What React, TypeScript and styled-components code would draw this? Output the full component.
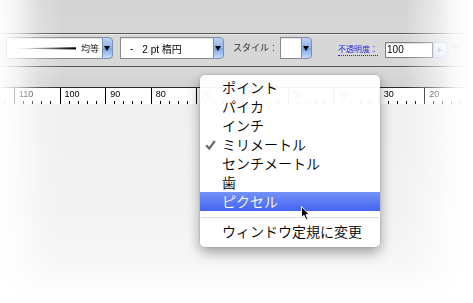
import styled, { createGlobalStyle } from 'styled-components'

const GlobalStyle = createGlobalStyle`
  html, body {
    margin: 0;
    padding: 0;
    background: #fff;
  }
  body {
    font-family: 'Liberation Sans', 'Noto Sans CJK JP', sans-serif;
  }
`

const RULER_STEP = 45.6
// first and last segments run off the edges, so they carry no number
const rulerLabels = ['', '110', '100', '90', '80', '70', '60', '50', '40', '30', '20', '']

const units = ['ポイント', 'パイカ', 'インチ', 'ミリメートル', 'センチメートル', '歯', 'ピクセル']

const App = () => {
    return (
        <>
            <GlobalStyle />
            <Stage>
                <Shot>
                    <TopArea />
                    <Toolbar>
                        <Combo $w={107} $ml={0}>
                            <ComboField>
                                <StrokePreview width='60' height='5' viewBox='0 0 60 5'>
                                    <defs>
                                        <linearGradient id='strokeFade' x1='0' x2='1' y1='0' y2='0'>
                                            <stop offset='0' stopColor='#d8d8d8' />
                                            <stop offset='1' stopColor='#000' />
                                        </linearGradient>
                                    </defs>
                                    <polygon points='0,2.3 60,1.2 60,3.6 0,2.8' fill='url(#strokeFade)' />
                                </StrokePreview>
                                <SmallCjk>均等</SmallCjk>
                            </ComboField>
                            <ComboButton />
                        </Combo>
                        <Combo $w={104} $ml={7}>
                            <ComboField>
                                <FieldText>-</FieldText>
                                <FieldText $ml={9}>2 pt 楕円</FieldText>
                            </ComboField>
                            <ComboButton />
                        </Combo>
                        <Label $ml={9} $size={9}>スタイル：</Label>
                        <Combo $w={32} $ml={2}>
                            <ComboField />
                            <ComboButton />
                        </Combo>
                        <LinkLabel>不透明度：</LinkLabel>
                        <NumberInput>100</NumberInput>
                        <Spinner />
                        <Percent>%</Percent>
                    </Toolbar>
                    <Gutter />
                    <Ruler>
                        <RulerTrack>
                            {rulerLabels.map((n, i) => (
                                <RulerSeg key={i} $w={RULER_STEP}>{n}</RulerSeg>
                            ))}
                        </RulerTrack>
                    </Ruler>
                    <Canvas />
                </Shot>

                <Menu>
                    {units.map((u) => (
                        <MenuItem key={u} $active={u === 'ピクセル'}>
                            <CheckSlot>
                                {u === 'ミリメートル' && (
                                    <svg width='11' height='10' viewBox='0 0 11 10'>
                                        <path d='M1.2 5.2 L4.2 8.6 L9.8 1' fill='none' stroke='#6e6e6e' strokeWidth='2.3' />
                                    </svg>
                                )}
                            </CheckSlot>
                            {u}
                        </MenuItem>
                    ))}
                    <Separator />
                    <MenuItem>
                        <CheckSlot />
                        ウィンドウ定規に変更
                    </MenuItem>
                </Menu>

                <Cursor width='10' height='15' viewBox='0 0 10 15'>
                    <path d='M0.5 0.5 L0.5 11.5 L3 9.2 L5 13.8 L6.8 13 L4.9 8.6 L8.2 8.6 Z' fill='#000' stroke='#fff' strokeWidth='0.9' />
                </Cursor>
            </Stage>
        </>
    )
}

export default App

const Stage = styled.div`
    position: relative;
    width: 473px;
    height: 303px;
    overflow: hidden;
    background: #fff;
`

const Shot = styled.div`
    display: flex;
    flex-direction: column;
    height: 100%;
    mask-image: linear-gradient(to right,
        rgba(0, 0, 0, 0.04) 0px,
        rgba(0, 0, 0, 0.3) 18px,
        rgba(0, 0, 0, 0.8) 40px,
        #000 62px,
        #000 405px,
        rgba(0, 0, 0, 0.5) 436px,
        rgba(0, 0, 0, 0.15) 453px,
        rgba(0, 0, 0, 0) 470px);
`

const TopArea = styled.div`
    height: 33px;
    background: linear-gradient(to bottom, #d3d3d3, #d7d7d7);
`

const Toolbar = styled.div`
    display: flex;
    align-items: flex-start;
    height: 34px;
    padding: 3px 0 0 6px;
    box-sizing: border-box;
    background: #d7d7d7;
    border-top: 1px solid #5b5b5b;
    border-bottom: 1px solid #575757;
    box-shadow: inset 0 1px 0 #e6e6e6;
`

const Combo = styled.div<{ $w: number, $ml: number }>`
    display: flex;
    width: ${p => p.$w}px;
    height: 22px;
    margin-left: ${p => p.$ml}px;
`

const ComboField = styled.div`
    flex: 1;
    display: flex;
    align-items: center;
    background: #fff;
    border: 1px solid #8a8a8a;
    border-right: none;
    box-shadow: inset 0 1px 1px rgba(0, 0, 0, 0.12);
`

const ComboButton = styled.div`
    flex: 0 0 11px;
    display: flex;
    align-items: center;
    justify-content: center;
    box-sizing: border-box;
    border: 1px solid #7b90b6;
    border-radius: 0 4px 4px 0;
    background: linear-gradient(to bottom, #bcd3f2 0%, #94b6ea 45%, #7ea6e5 55%, #c6e1fd 100%);

    &::after {
        content: '';
        margin-left: -1px;
        border-left: 3px solid transparent;
        border-right: 3px solid transparent;
        border-top: 5px solid #000;
    }
`

const StrokePreview = styled.svg`
    margin-left: 9px;
    margin-top: 1px;
`

const SmallCjk = styled.span`
    margin-left: 5px;
    font-family: 'Noto Sans CJK JP', sans-serif;
    font-size: 9px;
    color: #222;
`

const FieldText = styled.span<{ $ml?: number }>`
    margin-left: ${p => p.$ml ?? 9}px;
    font-size: 10px;
    color: #000;
    white-space: pre;
`

const Label = styled.span<{ $ml: number, $size: number }>`
    margin-left: ${p => p.$ml}px;
    line-height: 22px;
    font-family: 'Noto Sans CJK JP', sans-serif;
    font-size: ${p => p.$size}px;
    color: #2a2a2a;
`

const LinkLabel = styled.span`
    margin: 5px 0 0 26px;
    height: 13px;
    line-height: 13px;
    font-family: 'Noto Sans CJK JP', sans-serif;
    font-size: 8px;
    color: #2323d8;
    border-bottom: 1px dotted #2323d8;
`

const NumberInput = styled.div`
    align-self: center;
    margin: -3px 0 0 7px;
    width: 48px;
    height: 16px;
    box-sizing: border-box;
    padding-left: 1px;
    line-height: 14px;
    font-size: 10px;
    color: #000;
    background: #fff;
    border: 1px solid #7c7c7c;
    box-shadow: inset 0 1px 1px rgba(0, 0, 0, 0.15);
`

const Spinner = styled.div`
    align-self: center;
    margin-top: -3px;
    width: 14px;
    height: 16px;
    display: flex;
    align-items: center;
    justify-content: center;
    box-sizing: border-box;
    border: 1px solid #b8c6da;
    border-radius: 0 3px 3px 0;
    background: linear-gradient(to bottom, #eef3fa, #d3e2f4);

    &::after {
        content: '';
        border-top: 3px solid transparent;
        border-bottom: 3px solid transparent;
        border-left: 4px solid #a9a9a9;
    }
`

const Percent = styled.span`
    margin-left: 5px;
    line-height: 22px;
    font-size: 10px;
    color: #888;
`

const Gutter = styled.div`
    height: 20px;
    background: linear-gradient(to bottom, #d9d9d9, #d2d2d2);
`

const Ruler = styled.div`
    height: 16px;
    background: #fff;
    border-top: 1px solid #2a2a2a;
    overflow: hidden;
`

const RulerTrack = styled.div`
    display: flex;
    height: 100%;
    margin-left: -31.6px;
`

const RulerSeg = styled.div<{ $w: number }>`
    flex: 0 0 ${p => p.$w}px;
    box-sizing: border-box;
    padding: 2px 0 0 4px;
    border-left: 1px solid #000;
    font-size: 9px;
    line-height: 1;
    color: #000;
    background-image: repeating-linear-gradient(to right,
        transparent 0 ${p => p.$w / 5 - 1}px,
        #000 ${p => p.$w / 5 - 1}px ${p => p.$w / 5}px);
    background-size: 100% 3px;
    background-position: left bottom;
    background-repeat: no-repeat;
`

const Canvas = styled.div`
    flex: 1;
    background: linear-gradient(to bottom, #f0f0f0 0px, #f3f3f3 110px, #f7f7f7 160px, #fff 195px);
`

const Menu = styled.div`
    position: absolute;
    left: 200px;
    top: 75px;
    width: 180px;
    padding: 3px 0 6px;
    background: rgba(255, 255, 255, 0.95);
    border-radius: 5px;
    box-shadow: 0 5px 13px rgba(0, 0, 0, 0.38), 0 0 0 1px rgba(0, 0, 0, 0.06);
    font-family: 'Noto Sans CJK JP', sans-serif;
    font-size: 14px;
    font-weight: 350;
    color: #000;
`

const MenuItem = styled.div<{ $active?: boolean }>`
    display: flex;
    align-items: center;
    height: 19px;
    line-height: 19px;
    white-space: nowrap;
    color: ${p => p.$active ? '#fff' : '#000'};
    background: ${p => p.$active ? 'linear-gradient(to bottom, #7592f7, #4364f1)' : 'transparent'};
`

const CheckSlot = styled.span`
    display: flex;
    align-items: center;
    flex: 0 0 17px;
    padding-left: 5px;
`

const Separator = styled.div`
    margin: 6px 1px 4px;
    border-top: 1px solid #dcdcdc;
`

const Cursor = styled.svg`
    position: absolute;
    left: 301px;
    top: 206px;
`
